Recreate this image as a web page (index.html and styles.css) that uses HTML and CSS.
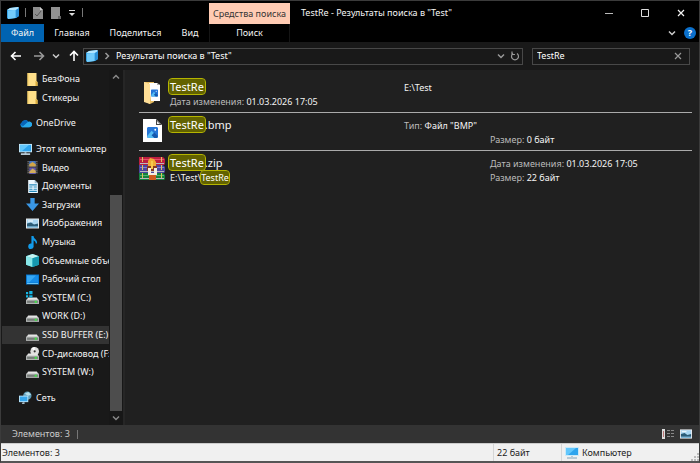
FILE: index.html
```html
<!DOCTYPE html>
<html lang="ru">
<head>
<meta charset="utf-8">
<title>TestRe - Результаты поиска в "Test"</title>
<link rel="stylesheet" href="styles.css">
</head>
<body>
<svg class="defs" aria-hidden="true">
  <symbol id="stack" viewBox="0 0 12 12"><path d="M3 1 11 0 12 1v8l-3 2-8 1-1-1V3z" fill="#38a5e8"/><path d="M0 3 3 1l8-1 1 1-3 2z" fill="#b5e7ff"/><path d="M1 3.500 8.500 2.800V11L1 12z" fill="#74cdfc"/><path d="M9 3l3-2v8l-3 2z" fill="#2b8fd6"/></symbol>
  <symbol id="folder" viewBox="0 0 12 13"><path d="M1 0h9v8l1 1v4H1z" fill="#ffe08a"/><path d="M9 8l2 1v4H9z" fill="#d9ab3c"/><path d="M1 0h1v13H1z" fill="#f2c95e"/></symbol>
  <symbol id="cloud" viewBox="0 0 14 10"><path d="M3 9a3 3 0 0 1 0-5 4 4 0 0 1 7-1 3 3 0 0 1 1 6z" fill="#1490df"/><path d="M3 4a4 4 0 0 1 7-1L5 8 1 6z" fill="#0864b8"/><path d="M3 9l6-5a3 3 0 1 1 2 5z" fill="#28a8ea"/></symbol>
  <symbol id="pc" viewBox="0 0 14 12"><path d="M0 0h14v9H0z" fill="#c9e9f8"/><path d="M1 1h12v7H1z" fill="#2da4ee"/><path d="M1 1h10L3 8H1z" fill="#62c7fc"/><path d="M6 9h2v1H6zM2 10h10v2H2z" fill="#b6c9d5"/></symbol>
  <symbol id="video" viewBox="0 0 12 12"><path d="M1 0h10v12H1z" fill="#303030"/><path d="M3 0h6v5H3z" fill="#4776bd"/><path d="M3 3l3-2 3 2v2H3z" fill="#d2a647"/><path d="M3 6h6v6H3z" fill="#6259ad"/><path d="M3 10l3-3 3 2v2H3z" fill="#d2ad5c"/><path d="M2 0v12M10 0v12" stroke="#777" stroke-dasharray="1 1"/></symbol>
  <symbol id="doc" viewBox="0 0 12 12"><path d="M2 0h6l3 3v9H2z" fill="#edf8ff"/><path d="M8 0v3h3z" fill="#9abbd0"/><path d="M3 4.500h7M3 6.500h3M7 6.500h3M3 8.500h3M7 8.500h3M3 10.500h7" stroke="#2387ba"/></symbol>
  <symbol id="down" viewBox="0 0 12 12"><path d="M4 0h4v5h4l-6 7-6-7h4z" fill="#3a97e5"/></symbol>
  <symbol id="image" viewBox="0 0 13 10"><path d="M0 0h13v10H0z" fill="#e5e9ec"/><path d="M1 1h11v8H1z" fill="#a9d6f2"/><path d="M1 5l4-1 3 2 4-1v3H1z" fill="#2b5c78"/><path d="M1 8h11v1H1z" fill="#65a8cf"/><path d="M2 2h5v1H2z" fill="#fff"/></symbol>
  <symbol id="music" viewBox="0 0 12 12"><path d="M5 0h2c0 3 4 3 3 7H9c0-2-1-2-2-3v5a2.500 2.500 0 1 1-2-2z" fill="#129bea"/></symbol>
  <symbol id="cube" viewBox="0 0 12 12"><path d="M0 2l6-2 6 2v8l-6 2-6-2z" fill="#29bdcd"/><path d="M0 2l6 2v8l-6-2z" fill="#88e6e7"/><path d="M0 2l6-2 6 2-6 2z" fill="#c5f3f1"/><path d="M6 4l6-2v8l-6 2z" fill="#1698af"/></symbol>
  <symbol id="desktop" viewBox="0 0 13 10"><path d="M0 0h13v10H0z" fill="#0878d1"/><path d="M1 1h11v7H1z" fill="#168ce8"/><path d="M1 1h9L3 8H1z" fill="#36a8f5"/><path d="M1 9h11" stroke="#69c4f6"/></symbol>
  <symbol id="drive" viewBox="0 0 12 12"><path d="M2 5h8l2 3H0z" fill="#e5e5e5"/><path d="M0 7h12v4H0z" fill="#b0b3b2"/><path d="M1 8h10v2H1z" fill="#777c7a"/><path d="M8 8h2v2H8z" fill="#43dd4a"/></symbol>
  <symbol id="sysdrive" viewBox="0 0 12 12"><use href="#drive" y="1"/><path d="M0 1h2v2H0zM3 0h3v3H3zM0 4h2v2H0zM3 4h3v2H3z" fill="#16b7e5"/></symbol>
  <symbol id="cd" viewBox="0 0 12 12"><circle cx="8" cy="4" r="4" fill="#dedede"/><path d="M8 4 5 1l3-1z" fill="#fff"/><circle cx="8" cy="4" r="1" fill="#333"/><use href="#drive" y="1"/></symbol>
  <symbol id="net" viewBox="0 0 14 14"><circle cx="9" cy="5" r="4.500" fill="#5f9db9"/><path d="M6 3l4-2 3 3-3 1z" fill="#b7dfeb"/><path d="M0 5h10v7H0z" fill="#b6e4fb"/><path d="M1 6h8v5H1z" fill="#36a7ed"/><path d="M4 12h2v2H3z" fill="#a6bdc9"/></symbol>
  <symbol id="chev" viewBox="0 0 8 8"><path d="M1 2.500 4 5.500 7 2.500" fill="none" stroke="currentColor" stroke-width="1.500"/></symbol>
  <symbol id="arrow" viewBox="0 0 12 10"><path d="M11 5H2M5.500 1 1.500 5l4 4" fill="none" stroke="currentColor" stroke-width="1.600"/></symbol>
  <symbol id="x" viewBox="0 0 8 8"><path d="M1 1l6 6M7 1 1 7" fill="none" stroke="currentColor" stroke-width="1.200"/></symbol>
  <symbol id="picture" viewBox="0 0 12 12"><path d="M1 0h10l1 1v10l-1 1H1l-1-1V1z" fill="#2676d7"/><path d="M0 10l5-6 7 7-1 1H1z" fill="#56bdf4"/><path d="M5 9l3-3 4 4-1 2H8z" fill="#1558ae"/><circle cx="9" cy="3" r="1" fill="#fff"/></symbol>
</svg>
<div class="window">
  <header class="head">
    <div class="quick">
      <svg class="i12"><use href="#stack"/></svg>
      <span class="bar"></span>
      <button aria-label="Свойства"><svg class="i12" viewBox="0 0 12 12"><path d="M1 0h7l3 3v9H1z" fill="#8d8d8d"/><path d="M8 0v3h3z" fill="#ccc"/><path d="M3 7l2 2 4-5" fill="none" stroke="#555"/></svg></button>
      <button aria-label="Новая папка"><svg class="i12" viewBox="0 0 12 12"><path d="M1 0h9v12H1z" fill="#929292"/><path d="M8 9h3v3H8z" fill="#666"/></svg></button>
      <button aria-label="Настройка панели"><svg class="i8" viewBox="0 0 8 8"><path d="M1 1.500h6" stroke="#ddd"/><path d="M1 4h6L4 7z" fill="#ddd"/></svg></button>
      <span class="bar"></span>
    </div>
    <div class="context">Средства поиска</div>
    <div class="titlebar">
      <h1>TestRe - Результаты поиска в "Test"</h1>
      <button aria-label="Свернуть"><svg class="i8" viewBox="0 0 8 8"><path d="M0 4.500h8" stroke="#bbb"/></svg></button>
      <button aria-label="Развернуть"><svg class="i8" viewBox="0 0 8 8"><path d="M.5.5h7v7h-7z" fill="none" stroke="#ddd"/></svg></button>
      <button aria-label="Закрыть"><svg class="i8"><use href="#x"/></svg></button>
    </div>
    <nav class="tabs">
      <button class="file">Файл</button><button>Главная</button><button>Поделиться</button><button>Вид</button>
    </nav>
    <button class="searchtab">Поиск</button>
    <div class="helpers">
      <button aria-label="Развернуть ленту"><svg class="i8"><use href="#chev"/></svg></button>
      <button class="help" aria-label="Справка">?</button>
    </div>
  </header>
  <div class="navbar">
    <div class="arrows">
      <button aria-label="Назад"><svg class="i12 white" viewBox="0 0 12 10"><use href="#arrow"/></svg></button>
      <button aria-label="Вперёд"><svg class="i12 flip"><use href="#arrow"/></svg></button>
      <button aria-label="Последние"><svg class="i8 light"><use href="#chev"/></svg></button>
      <button aria-label="Вверх"><svg class="i12 white" viewBox="0 0 12 12"><path d="M6 11V2M2 5.500 6 1.500l4 4" fill="none" stroke="currentColor" stroke-width="1.600"/></svg></button>
    </div>
    <div class="address">
      <svg class="i12"><use href="#stack"/></svg>
      <svg class="i8 right"><use href="#chev"/></svg>
      <span class="path">Результаты поиска в "Test"</span>
      <button aria-label="Предыдущие адреса"><svg class="i8"><use href="#chev"/></svg></button>
      <button aria-label="Обновить"><svg class="i10" viewBox="0 0 10 10"><path d="M7 2.500A3.500 3.500 0 1 1 3 2.500M2 .5v3h3" fill="none" stroke="currentColor" stroke-width="1.200"/></svg></button>
    </div>
    <div class="search">
      <input type="text" value="TestRe" aria-label="Поиск">
      <button aria-label="Очистить"><svg class="i8"><use href="#x"/></svg></button>
    </div>
  </div>
  <main class="main">
    <aside class="side">
      <nav class="tree">
        <ul class="group two">
          <li class="child"><svg><use href="#folder"/></svg><span>БезФона</span></li>
          <li class="child"><svg><use href="#folder"/></svg><span>Стикеры</span></li>
        </ul>
        <ul class="group one">
          <li><svg><use href="#cloud"/></svg><span>OneDrive</span></li>
        </ul>
        <ul class="group many">
          <li><svg><use href="#pc"/></svg><span>Этот компьютер</span></li>
          <li class="child"><svg><use href="#video"/></svg><span>Видео</span></li>
          <li class="child"><svg><use href="#doc"/></svg><span>Документы</span></li>
          <li class="child"><svg><use href="#down"/></svg><span>Загрузки</span></li>
          <li class="child"><svg><use href="#image"/></svg><span>Изображения</span></li>
          <li class="child"><svg><use href="#music"/></svg><span>Музыка</span></li>
          <li class="child"><svg><use href="#cube"/></svg><span>Объемные объекты</span></li>
          <li class="child"><svg><use href="#desktop"/></svg><span>Рабочий стол</span></li>
          <li class="child"><svg><use href="#sysdrive"/></svg><span>SYSTEM (C:)</span></li>
          <li class="child"><svg><use href="#drive"/></svg><span>WORK (D:)</span></li>
          <li class="child selected"><svg><use href="#drive"/></svg><span>SSD BUFFER (E:)</span></li>
          <li class="child"><svg><use href="#cd"/></svg><span>CD-дисковод (F:)</span></li>
          <li class="child"><svg><use href="#drive"/></svg><span>SYSTEM (W:)</span></li>
        </ul>
        <ul class="group one">
          <li><svg><use href="#net"/></svg><span>Сеть</span></li>
        </ul>
      </nav>
      <div class="scroll">
        <button aria-label="Прокрутить вверх"><svg class="i8 up"><use href="#chev"/></svg></button>
        <div class="track"><div class="thumb"></div></div>
        <button aria-label="Прокрутить вниз"><svg class="i8"><use href="#chev"/></svg></button>
      </div>
    </aside>
    <section class="results">
      <article class="item">
        <svg class="thumbnail" viewBox="0 0 26 26"><path d="M5 2h10v20l-4 2-6-3z" fill="#e8bd62"/><path d="M10 3h8l3 2v16h-9z" fill="#fff"/><path d="M18 3v2h3z" fill="#aaa"/><svg x="12" y="9" width="7" height="8"><use href="#picture"/></svg><path d="M5 2l6 2v20l-6-2z" fill="#ffdf97"/></svg>
        <div class="name"><h2><mark>TestRe</mark></h2><p><span class="label">Дата изменения:</span> 01.03.2026 17:05</p></div>
        <div class="kind"><p>E:\Test</p></div>
        <div class="meta"></div>
      </article>
      <article class="item">
        <svg class="thumbnail" viewBox="0 0 26 26"><path d="M4 1h13l6 6v17H4z" fill="#fff"/><path d="M17 1v6h6z" fill="#444"/><path d="M18 3v3h3z" fill="#eee"/><svg x="8" y="9" width="11" height="11"><use href="#picture"/></svg></svg>
        <div class="name"><h2><mark>TestRe</mark>.bmp</h2></div>
        <div class="kind"><p><span class="label">Тип:</span> Файл "BMP"</p></div>
        <div class="meta low"><p><span class="label">Размер:</span> 0 байт</p></div>
      </article>
      <article class="item">
        <svg class="thumbnail" viewBox="0 0 26 26"><path d="M0 1h24l2 2v5l-1 1H0z" fill="#bd1f3f"/><path d="M0 9h24l2 2v5l-1 1H0z" fill="#4c469f"/><path d="M0 17h24l2 2v4l-1 1H0z" fill="#16823e"/><path d="M1 3.500h24" stroke="#e6506b"/><path d="M1 11.500h24" stroke="#8880cf"/><path d="M1 19.500h24" stroke="#50b873"/><path d="M1 7.500h24M1 15.500h24M1 22.500h24" stroke="#b9b9c0"/><path d="M3.500 1v23M22.500 1v23" stroke="#dfc15c" stroke-dasharray="5 3"/><path d="M9 5l2-3 4 1 2 3v5H9z" fill="#efab35"/><path d="M8 10h10v5H8z" fill="#893821"/><path d="M9 12h3v5h3v-5h3v7H9z" fill="#f4eee0"/><path d="M12 5h2v8h-2z" fill="#f7c84d"/><path d="M10 19h7v5h-7z" fill="#ce5c20"/></svg>
        <div class="name"><h2><mark>TestRe</mark>.zip</h2><p>E:\Test\<mark>TestRe</mark></p></div>
        <div class="kind"></div>
        <div class="meta"><p><span class="label">Дата изменения:</span> 01.03.2026 17:05</p><p><span class="label">Размер:</span> 22 байт</p></div>
      </article>
    </section>
  </main>
  <div class="info">
    <span>Элементов: 3</span><span class="bar"></span>
    <div class="views">
      <button aria-label="Таблица"><svg class="i12" viewBox="0 0 12 10"><path d="M0 0h3v10H0z" fill="#ddd"/><path d="M1 2h1v6H1z" fill="#b77"/><path d="M5 1.500h3M9 1.500h3M5 4.500h3M9 4.500h3M5 7.500h3M9 7.500h3" stroke="#888"/></svg></button>
      <button aria-label="Крупные значки"><svg class="i12"><use href="#image"/></svg></button>
    </div>
  </div>
  <footer class="status">
    <span class="count">Элементов: 3</span>
    <span class="size">22 байт</span>
    <span class="place"><svg class="i14"><use href="#pc"/></svg>Компьютер</span>
    <svg class="i8 grip" viewBox="0 0 8 8"><path d="M6 0h2v2H6zM3 3h2v2H3zM6 3h2v2H6zM0 6h2v2H0zM3 6h2v2H3zM6 6h2v2H6z" fill="#bbb"/></svg>
  </footer>
</div>
</body>
</html>
```
FILE: styles.css
```css
* { box-sizing: border-box; }
body { margin: 0; background: #202020; color: #f4f4f4; font: 9px/14px "Noto Sans", "Open Sans", sans-serif; }
h1, h2, p, ul { margin: 0; padding: 0; font-weight: 400; }
button { margin: 0; padding: 0; border: 0; background: none; color: inherit; font: inherit; display: flex; align-items: center; justify-content: center; }
svg { display: block; flex: none; }
.defs { display: none; }
.i8 { width: 8px; height: 8px; }
.i10 { width: 10px; height: 10px; }
.i12 { width: 12px; height: 12px; }
.i14 { width: 14px; height: 12px; }
.flip { transform: scaleX(-1); }
.up { transform: rotate(180deg); }
.right { transform: rotate(-90deg); }
.white { color: #fff; }
.light { color: #ccc; }
.bar { width: 1px; height: 9px; background: #777; }
.window { min-height: 100vh; display: flex; flex-direction: column; border: 1px solid #3b3b3b; border-bottom: 2px solid #555; }

.head { display: grid; grid-template-columns: 208px 81px 1fr; grid-template-rows: 23px 18px; background: #000; }
.quick { display: flex; align-items: center; padding-left: 6px; gap: 6px; }
.context { background: #ffcbb3; color: #333; text-align: center; line-height: 22px; margin-top: 2px; }
.titlebar { display: flex; align-items: center; padding-left: 11px; }
.titlebar h1 { flex: 1; font-size: 9px; }
.titlebar button { width: 36px; height: 22px; }
.tabs { display: grid; grid-template-columns: 43px 56px 71px 38px; }
.file { background: #0063b1; }
.searchtab { border: solid #151515; border-width: 0 1px; }
.helpers { display: flex; justify-content: flex-end; align-items: center; gap: 8px; padding-right: 3px; color: #ccc; }
.help { width: 12px; height: 12px; border-radius: 50%; background: #0b70cc; color: #fff; font-weight: 700; line-height: 12px; }

.navbar { display: flex; align-items: center; height: 28px; background: #191919; padding-right: 9px; color: #999; }
.arrows { display: grid; grid-template-columns: 30px 16px 18px 18px; flex: none; }
.address, .search { display: flex; align-items: center; height: 17px; border: 1px solid #484848; background: #191919; }
.address { flex: 1; padding: 0 2px; gap: 5px; }
.path { flex: 1; color: #fff; }
.search { width: 158px; margin-left: 9px; padding: 0 7px 0 4px; }
.search input { flex: 1; min-width: 0; border: 0; outline: 0; padding: 0; background: none; color: #fff; font: inherit; }

.main { flex: 1; display: flex; min-height: 0; }
.side { display: flex; width: 124px; flex: none; background: #191919; border-right: 2px solid #262626; }
.tree { flex: 1; min-width: 0; display: flex; flex-direction: column; gap: 7px; padding-bottom: 18px; }
.group { list-style: none; display: flex; flex-direction: column; flex: 1 1 0; }
.two { flex-grow: 2; }
.many { flex-grow: 13; }
.group li { flex: 1 1 0; min-height: 14px; display: flex; align-items: center; gap: 4px; padding-left: 17px; margin-left: 1px; white-space: nowrap; overflow: hidden; }
.group svg { width: 13px; height: 13px; }
.group .child { padding-left: 24px; gap: 3px; }
.selected { background: #333; }
.scroll { width: 14px; flex: none; display: flex; flex-direction: column; background: #171717; color: #888; }
.scroll button { height: 14px; }
.track { flex: 1; display: flex; flex-direction: column; justify-content: flex-end; }
.thumb { height: 66%; background: #4d4d4d; margin: 0 1px; }

.results { flex: 1; min-width: 0; padding: 5px 7px 0 14px; }
.item { display: grid; grid-template-columns: 26px 238px 86px 1fr; min-height: 38px; padding-top: 3px; border-bottom: 1px solid #aaa; }
.item:last-child { border-bottom: 0; }
.thumbnail { width: 26px; height: 26px; margin-top: 2px; }
.name { padding-left: 4px; }
.name h2 { font-size: 11px; line-height: 17px; }
.name p, .kind p, .meta p { line-height: 14px; padding-left: 1px; }
.kind, .meta { padding-top: 3px; }
.low { padding-top: 17px; }
.label { color: #bbb; }
mark { background: #626200; color: #fff; border-radius: 3px; outline: 1px solid #b5b500; }
h2 mark { padding: 0 1px; }

.info { display: flex; align-items: center; height: 18px; background: #333; padding: 0 7px 0 11px; gap: 7px; color: #ccc; }
.views { display: flex; gap: 6px; margin-left: auto; }
.status { display: flex; height: 18px; line-height: 18px; border-top: 1px solid #ccc; background: #f0f0f0; color: #222; padding-left: 1px; }
.count { flex: 1; }
.size { width: 68px; border-left: 1px solid #d5d5d5; padding-left: 3px; }
.place { display: flex; align-items: center; gap: 3px; width: 130px; border-left: 1px solid #d5d5d5; padding-left: 3px; }
.grip { align-self: flex-end; }
```
